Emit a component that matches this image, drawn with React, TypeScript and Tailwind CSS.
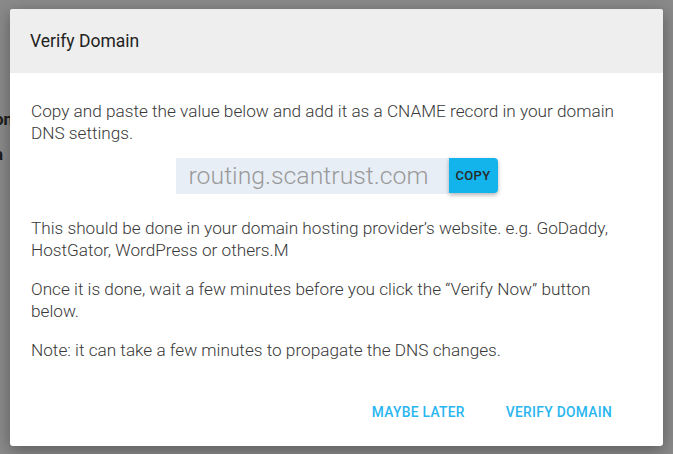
export default function App() {
  return (
    <div className="relative w-[673px] h-[454px] overflow-hidden bg-[#8a8a8a] font-['Roboto',sans-serif]">
      {/* page behind the backdrop */}
      <div className="pt-[108px] text-[#1c1c1c] font-bold text-[17px]">
        <p className="ml-[-6px] leading-[22px]">on</p>
        <p className="ml-[-6px] mt-[13px] leading-[22px]">a</p>
      </div>

      <div className="absolute left-[10px] top-[9px] w-[653px] h-[437px] bg-white rounded-[3px] shadow-[0_4px_16px_rgba(0,0,0,0.35)] flex flex-col overflow-hidden">
        <div className="h-[64px] bg-[#eeeeee] flex items-center px-5">
          <h2 className="text-[17.5px] text-[#222] font-normal">Verify Domain</h2>
        </div>

        <div className="flex-1 px-[21px] pt-[27px] text-[17.2px] leading-[22px] text-[#383838] font-light">
          <p>Copy and paste the value below and add it as a CNAME record in your domain DNS settings.</p>

          <div className="flex justify-center mt-[14px]">
            <div className="w-[273px] h-[36px] bg-[#e8eef6] flex items-center pl-[13px] text-[24.8px] text-[#9a9a9a] font-light">
              routing.scantrust.com
            </div>
            <button className="w-[49px] h-[35px] bg-[#13b3ec] rounded-r-[4px] shadow-[0_2px_4px_rgba(0,0,0,0.3)] text-[13px] font-medium text-[#2a2a2a] tracking-[0.3px]">
              COPY
            </button>
          </div>

          <p className="mt-[23px]">
            This should be done in your domain hosting provider’s website. e.g. GoDaddy, HostGator, WordPress or others.M
          </p>
          <p className="mt-[17px]">
            Once it is done, wait a few minutes before you click the “Verify Now” button below.
          </p>
          <p className="mt-[17px]">Note: it can take a few minutes to propagate the DNS changes.</p>
        </div>

        <div className="flex justify-end items-center gap-[9px] pr-[35px] pb-[16px]">
          <button className="px-4 h-[36px] text-[13.8px] font-medium text-[#29b6f0] tracking-[0.3px]">MAYBE LATER</button>
          <button className="px-4 h-[36px] text-[13.8px] font-medium text-[#29b6f0] tracking-[0.3px]">VERIFY DOMAIN</button>
        </div>
      </div>
    </div>
  );
}
